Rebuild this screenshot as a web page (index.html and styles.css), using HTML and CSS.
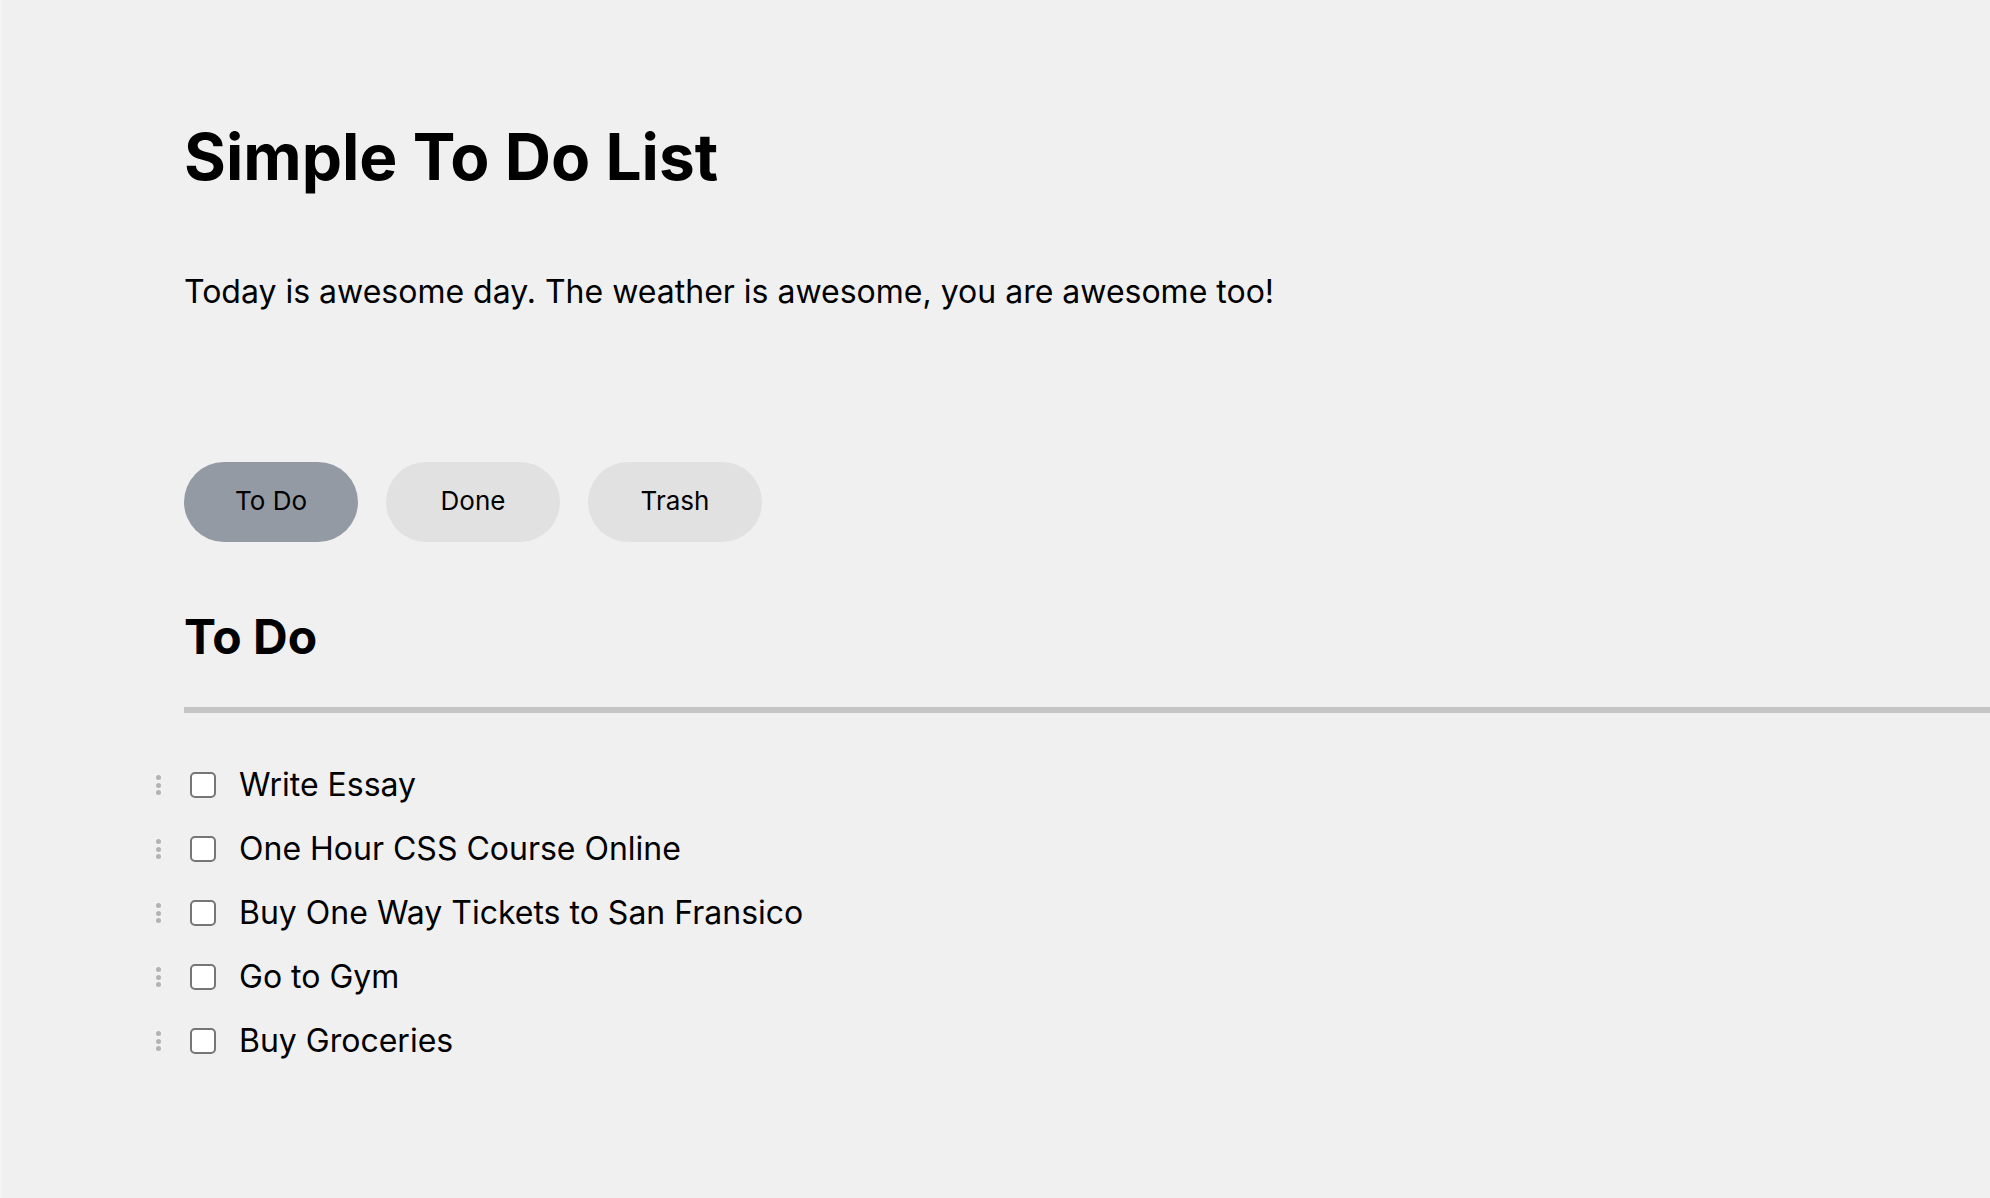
FILE: index.html
```html
<!DOCTYPE html>
<html lang="en">
<head>
<meta charset="utf-8">
<title>Simple To Do List</title>
<link rel="stylesheet" href="styles.css">
</head>
<body>
<main class="page">
  <h1 class="title">Simple To Do List</h1>
  <p class="intro">Today is awesome day. The weather is awesome, you are awesome too!</p>
  <nav class="tabs">
    <button class="tab tab-active">To Do</button>
    <button class="tab">Done</button>
    <button class="tab">Trash</button>
  </nav>
  <h2 class="section-title">To Do</h2>
  <hr class="divider">
  <ul class="list">
    <li class="item"><span class="handle"><i></i><i></i><i></i></span><span class="check"></span><span class="label">Write Essay</span></li>
    <li class="item"><span class="handle"><i></i><i></i><i></i></span><span class="check"></span><span class="label">One Hour CSS Course Online</span></li>
    <li class="item"><span class="handle"><i></i><i></i><i></i></span><span class="check"></span><span class="label">Buy One Way Tickets to San Fransico</span></li>
    <li class="item"><span class="handle"><i></i><i></i><i></i></span><span class="check"></span><span class="label">Go to Gym</span></li>
    <li class="item"><span class="handle"><i></i><i></i><i></i></span><span class="check"></span><span class="label">Buy Groceries</span></li>
  </ul>
</main>
</body>
</html>
```

FILE: styles.css
```css
html, body {
  margin: 0;
  padding: 0;
  background: #f0f0f0;
}
body {
  font-family: Inter, "Noto Sans", sans-serif;
  color: #000;
  border-left: 2px solid #f4f4f4;
  min-height: 1198px;
  box-sizing: border-box;
}
.page {
  padding: 117px 0 0 182px;
}
.title {
  margin: 0;
  font-size: 64px;
  line-height: 80px;
  font-weight: 700;
}
.intro {
  margin: 75px 0 0;
  font-size: 32px;
  line-height: 40px;
  font-weight: 400;
}
.tabs {
  display: flex;
  gap: 28px;
  margin-top: 150px;
}
.tab {
  width: 174px;
  height: 80px;
  border: none;
  border-radius: 40px;
  background: #e1e1e1;
  font-family: Inter, "Noto Sans", sans-serif;
  font-size: 26px;
  color: #000;
  padding: 0 0 4px;
}
.tab-active {
  background: #939aa4;
}
.section-title {
  margin: 66px 0 0;
  font-size: 48px;
  line-height: 58px;
  font-weight: 700;
}
.divider {
  margin: 41px 0 0;
  border: none;
  height: 6px;
  background: #c4c4c4;
}
.list {
  list-style: none;
  margin: 40px 0 0 -28px;
  padding: 0;
}
.item {
  display: flex;
  align-items: center;
  height: 64px;
}
.handle {
  display: flex;
  flex-direction: column;
  gap: 2.5px;
  width: 5px;
  margin-right: 29px;
}
.handle i {
  display: block;
  width: 5px;
  height: 5px;
  border-radius: 50%;
  background: #b3b3b3;
}
.check {
  width: 26px;
  height: 26px;
  box-sizing: border-box;
  border: 2px solid #767676;
  border-radius: 5px;
  background: #fff;
  margin-right: 23px;
}
.label {
  font-size: 32px;
  line-height: 40px;
}
```
